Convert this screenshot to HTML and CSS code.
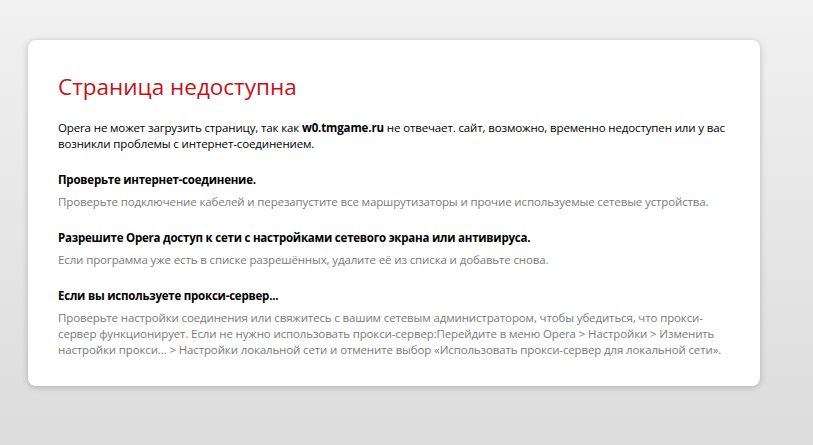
FILE: index.html
```html
<!DOCTYPE html>
<html>
<head>
    <meta charset="utf-8">
    <title>Страница недоступна</title>
    <link rel="stylesheet" href="styles.css">
</head>
<body>
    <!-- Карточка ошибки -->
    <div class="error-card">
        <h1 class="error-title">Страница недоступна</h1>
        <p class="error-text">Opera не может загрузить страницу, так как <b>w0.tmgame.ru</b> не отвечает. сайт, возможно, временно недоступен или у вас возникли проблемы с интернет-соединением.</p>

        <div class="tip">
            <h3>Проверьте интернет-соединение.</h3>
            <p>Проверьте подключение кабелей и перезапустите все маршрутизаторы и прочие используемые сетевые устройства.</p>
        </div>

        <div class="tip">
            <h3>Разрешите Opera доступ к сети с настройками сетевого экрана или антивируса.</h3>
            <p>Если программа уже есть в списке разрешённых, удалите её из списка и добавьте снова.</p>
        </div>

        <div class="tip">
            <h3>Если вы используете прокси-сервер...</h3>
            <p>Проверьте настройки соединения или свяжитесь с вашим сетевым администратором, чтобы убедиться, что прокси-сервер функционирует. Если не нужно использовать прокси-сервер:Перейдите в меню Opera &gt; Настройки &gt; Изменить настройки прокси... &gt; Настройки локальной сети и отмените выбор «Использовать прокси-сервер для локальной сети».</p>
        </div>
    </div>
</body>
</html>
```

FILE: styles.css
```css
html {
    height: 100%;
}

body {
    margin: 0;
    padding: 40px 53px 60px 28px;
    min-height: 100%;
    box-sizing: border-box;
    background: linear-gradient(#f1f1f1, #dcdcdc);
    font-family: "Open Sans", "Noto Sans", sans-serif;
    font-size: 11.5px;
    letter-spacing: -0.13px;
    color: #000;
}

/* Карточка */
.error-card {
    background-color: #ffffff;
    border-radius: 8px;
    box-shadow: 0 1px 6px rgba(0, 0, 0, 0.22);
    padding: 30px 30px 28px 30px;
    width: 672px;
}

.error-title {
    color: #c8101a;
    font-weight: normal;
    font-size: 22.5px;
    letter-spacing: 0;
    margin: 2px 0 18px 0;
    line-height: 30px;
}

.error-text {
    margin: 0 0 20px 0;
    line-height: 16px;
}

.error-text b {
    font-weight: 700;
}

/* Советы */
.tip h3 {
    font-size: 11.5px;
    font-weight: 700;
    letter-spacing: -0.22px;
    margin: 0 0 6px 0;
    line-height: 16px;
}

.tip p {
    color: #7a7a7a;
    margin: 0 0 20px 0;
    line-height: 16px;
}

.tip:last-child p {
    margin-bottom: 0;
}
```
